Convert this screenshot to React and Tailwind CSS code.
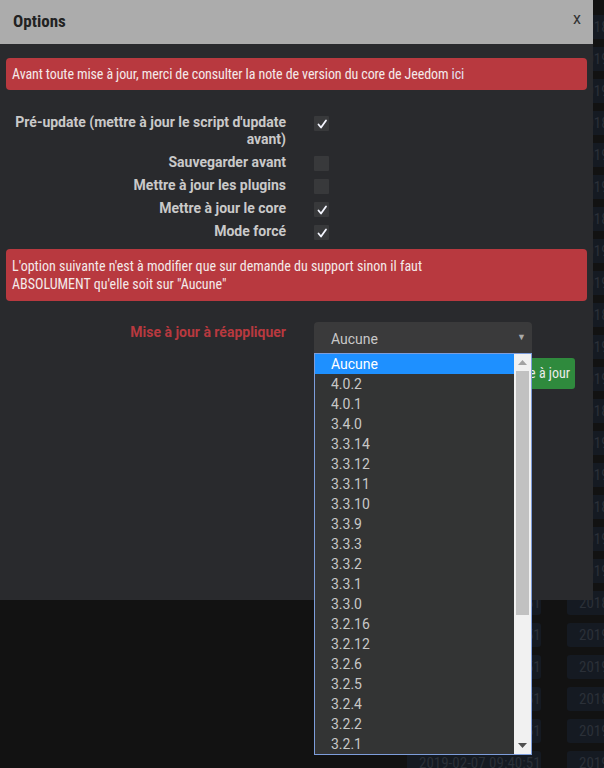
const rows = [
  { label: ["Pré-update (mettre à jour le script d'update", "avant)"], checked: true },
  { label: ["Sauvegarder avant"], checked: false },
  { label: ["Mettre à jour les plugins"], checked: false },
  { label: ["Mettre à jour le core"], checked: true },
  { label: ["Mode forcé"], checked: true },
];

const versions = [
  "Aucune", "4.0.2", "4.0.1", "3.4.0", "3.3.14", "3.3.12", "3.3.11", "3.3.10", "3.3.9", "3.3.3",
  "3.3.2", "3.3.1", "3.3.0", "3.2.16", "3.2.12", "3.2.6", "3.2.5", "3.2.4", "3.2.2", "3.2.1",
];

const bgRows = Array.from({ length: 24 });

const NARROW = "font-['Roboto_Condensed','Liberation_Sans_Narrow','DejaVu_Sans_Condensed',sans-serif]";

function Check({ checked }) {
  return (
    <div className="mt-[2px] flex h-[15px] w-[15px] items-center justify-center rounded-[1px] bg-[#38393b]">
      {checked && (
        <svg width="12" height="12" viewBox="0 0 12 12" fill="none">
          <path d="M2.5 6.5 L5 9.5 L10 2.5" stroke="#f4f6ff" strokeWidth="1.8" strokeLinecap="round" strokeLinejoin="round" />
        </svg>
      )}
    </div>
  );
}

export default function App() {
  return (
    <div className="relative h-[768px] w-[604px] overflow-hidden bg-[#121212] font-['Roboto',sans-serif]">
      {/* page behind the modal */}
      <div className="flex flex-col gap-[8px] pt-[15px]">
        {bgRows.map((_, i) => (
          <div key={i} className="flex gap-[26px] pl-[407px]">
            <div className={`flex h-[24px] w-[134px] shrink-0 items-center overflow-hidden whitespace-nowrap rounded-[3px] bg-[#151a22] pl-[12px] text-[15px] text-[#2b3038] ${NARROW}`}>
              2019-02-07 09:40:51
            </div>
            <div className={`flex h-[24px] w-[134px] shrink-0 items-center overflow-hidden whitespace-nowrap rounded-[3px] bg-[#151a22] pl-[12px] text-[15px] text-[#2b3038] ${NARROW}`}>
              {i % 3 === 0 ? "2018-12-04 10:12:33" : "2019-01-18 16:22:08"}
            </div>
          </div>
        ))}
      </div>

      {/* modal */}
      <div className="absolute left-0 top-0 h-[600px] w-[593px] bg-[#292a2d]">
        <div className="flex h-[44px] items-center justify-between bg-[#acacac] pl-[13px] pr-[12px]">
          <span className={`text-[17px] font-bold text-[#222] ${NARROW}`}>Options</span>
          <span className="-mt-[7px] text-[16px] text-[#333]">x</span>
        </div>

        <div className="px-[6px] pt-[14px]">
          <div className={`flex h-[32px] items-center rounded-[4px] bg-[#b8393f] px-[6px] text-[14px] tracking-[-0.1px] text-[#f4eaea] ${NARROW}`}>
            Avant toute mise à jour, merci de consulter la note de version du core de Jeedom&nbsp;<span className="text-[#e4e0f4]">ici</span>
          </div>

          <div className="mt-[24px] flex flex-col gap-[6px]">
            {rows.map((r, i) => (
              <div key={i} className="flex items-start">
                <div className="w-[280px] text-right text-[14px] font-bold leading-[17px] text-[#c9c9c9]">
                  {r.label.map((l, j) => (
                    <div key={j}>{l}</div>
                  ))}
                </div>
                <div className="ml-[28px]">
                  <Check checked={r.checked} />
                </div>
              </div>
            ))}
          </div>

          <div className={`mt-[9px] rounded-[4px] bg-[#b8393f] px-[6px] pb-[8px] pt-[8px] text-[14px] leading-[18px] text-[#f4eaea] ${NARROW}`}>
            L'option suivante n'est à modifier que sur demande du support sinon il faut
            <br />
            ABSOLUMENT qu'elle soit sur "Aucune"
          </div>

          <div className="mt-[21px] flex items-start">
            <div className="w-[280px] pt-[2px] text-right text-[14px] font-bold leading-[17px] text-[#b8393f]">
              Mise à jour à réappliquer
            </div>
            <div className="ml-[28px] flex h-[32px] w-[218px] items-center justify-between rounded-t-[4px] bg-[#3a3a3b] pl-[17px] pr-[6px] text-[14px] text-[#c8c8c8]">
              <span className="mt-[2px]">Aucune</span>
              <span className="text-[9px] text-[#aaa]">▼</span>
            </div>
          </div>

          <div className="flex justify-end pr-[12px] pt-[4px]">
            <button className={`flex h-[31px] items-center rounded-[3px] bg-[#2f8a3d] pl-[8px] pr-[5px] text-[14px] text-[#ececec] ${NARROW}`}>
              Mettre à jour
            </button>
          </div>
        </div>
      </div>

      {/* open select list */}
      <div className="absolute left-[314px] top-[353px] flex h-[402px] w-[218px] border border-[#7d9ddb] bg-[#333434]">
        <div className="flex flex-1 flex-col">
          {versions.map((v, i) => (
            <div
              key={v}
              className={
                i === 0
                  ? "flex h-[20px] items-center bg-[#1e90ff] pl-[16px] text-[14px] text-white"
                  : "flex h-[20px] items-center pl-[16px] text-[14px] text-[#c8c8c8]"
              }
            >
              {v}
            </div>
          ))}
        </div>
        <div className="flex w-[17px] flex-col items-center bg-[#f1f1f1]">
          <div className="flex h-[17px] items-center">
            <svg width="9" height="5" viewBox="0 0 9 5"><path d="M0 5 L4.5 0 L9 5 Z" fill="#a3a3a3" /></svg>
          </div>
          <div className="h-[244px] w-[13px] bg-[#c1c1c1]" />
          <div className="flex-1" />
          <div className="flex h-[17px] items-center">
            <svg width="9" height="5" viewBox="0 0 9 5"><path d="M0 0 L9 0 L4.5 5 Z" fill="#505050" /></svg>
          </div>
        </div>
      </div>
    </div>
  );
}
